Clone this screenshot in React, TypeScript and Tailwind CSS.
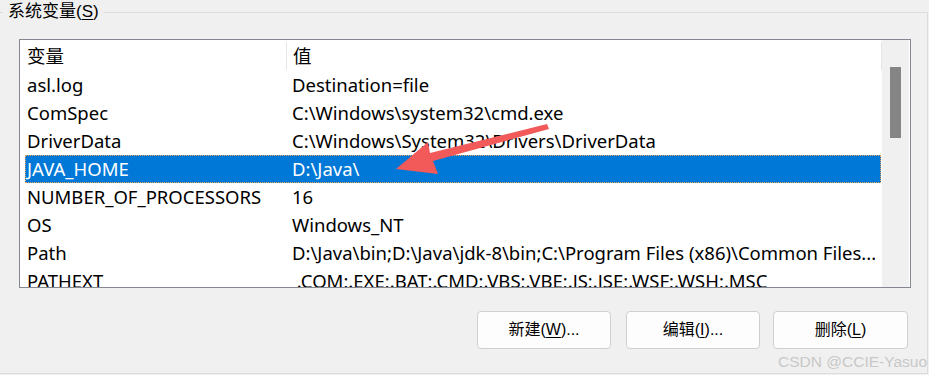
import React from "react";

const rows = [
  { name: "asl.log", value: "Destination=file" },
  { name: "ComSpec", value: "C:\\Windows\\system32\\cmd.exe" },
  { name: "DriverData", value: "C:\\Windows\\System32\\Drivers\\DriverData" },
  { name: "JAVA_HOME", value: "D:\\Java\\", selected: true },
  { name: "NUMBER_OF_PROCESSORS", value: "16" },
  { name: "OS", value: "Windows_NT" },
  {
    name: "Path",
    value: "D:\\Java\\bin;D:\\Java\\jdk-8\\bin;C:\\Program Files (x86)\\Common Files...",
  },
  { name: "PATHEXT", value: " .COM;.EXE;.BAT;.CMD;.VBS;.VBE;.JS;.JSE;.WSF;.WSH;.MSC" },
];

const font = "font-['Liberation_Sans','Noto_Sans_CJK_SC',sans-serif]";
const listFont = "font-['Noto_Sans','Noto_Sans_CJK_SC',sans-serif]";

function Button({ label, hot, rest, className }: { label: string; hot: string; rest: string; className?: string }) {
  return (
    <div
      className={`h-[38px] rounded-[4px] border border-[#d0d0d0] bg-[#fdfdfd] flex items-center justify-center text-[16px] text-black ${className ?? ""}`}
    >
      {label}(<span className="underline underline-offset-2">{hot}</span>){rest}
    </div>
  );
}

export default function App() {
  return (
    <div className={`relative w-[929px] h-[375px] overflow-hidden bg-[#f0f0f0] ${font}`}>
      {/* group title sits over the frame line */}
      <div className="absolute left-[3px] top-0 px-[5px] bg-[#f0f0f0] text-[17px] leading-[24px] text-black">
        系统变量(<span className="underline underline-offset-2">S</span>)
      </div>

      <div className="mt-[12px] h-[362px] w-[928px] border-t border-r border-b border-[#dcdcdc] pt-[26px] pl-[19px]">
        {/* list view */}
        <div className="w-[892px] h-[249px] border border-[#828790] bg-white flex overflow-hidden">
          <div className={`w-[862px] h-full flex flex-col overflow-hidden text-[18.5px] leading-[24px] text-black ${listFont}`}>
            <div className="h-[31px] shrink-0 flex items-center">
              <div className="w-[266px] h-full pl-[7px] flex items-center">变量</div>
              <div className="w-px h-[28px] bg-[#e5e5e5] self-start mt-[2px]" />
              <div className="flex-1 h-full pl-[6px] flex items-center">值</div>
              <div className="w-px h-[28px] bg-[#e5e5e5] self-start mt-[2px]" />
            </div>
            {rows.map((r) => (
              <div key={r.name} className="h-[28px] shrink-0 flex pl-[5px] pr-px">
                <div
                  className={`flex-1 flex items-center ${
                    r.selected ? "bg-[#0078d7] text-white outline outline-1 outline-dotted outline-[#e8a25c] -outline-offset-1" : ""
                  }`}
                >
                  <div className="w-[262px] pl-[2px] whitespace-nowrap">{r.name}</div>
                  <div className="w-[588px] pl-[5px] whitespace-pre overflow-hidden">{r.value}</div>
                </div>
              </div>
            ))}
          </div>
          {/* scrollbar */}
          <div className="w-[27px] h-full bg-[#f0f0f0] pt-[27px] pl-[8px]">
            <div className="w-[11px] h-[71px] bg-[#858585]" />
          </div>
        </div>

        {/* buttons */}
        <div className="mt-[23px] flex">
          <Button label="新建" hot="W" rest="..." className="w-[134px] ml-[458px]" />
          <Button label="编辑" hot="I" rest="..." className="w-[134px] ml-[15px]" />
          <Button label="删除" hot="L" rest="" className="w-[135px] ml-[13px]" />
        </div>
      </div>

      {/* annotation arrow */}
      <svg className="absolute left-0 top-0 pointer-events-none" width="929" height="375" viewBox="0 0 929 375">
        <polygon
          points="396,169 428,142 430,153 547,124 549,129 433,161 438,174"
          fill="#f25a5a"
        />
      </svg>

      {/* watermark */}
      <div className="absolute right-[2px] bottom-[3px] text-[15.5px] leading-[20px] text-[#c8c8c8] font-['Liberation_Sans',sans-serif]">
        CSDN @CCIE-Yasuo
      </div>
    </div>
  );
}
